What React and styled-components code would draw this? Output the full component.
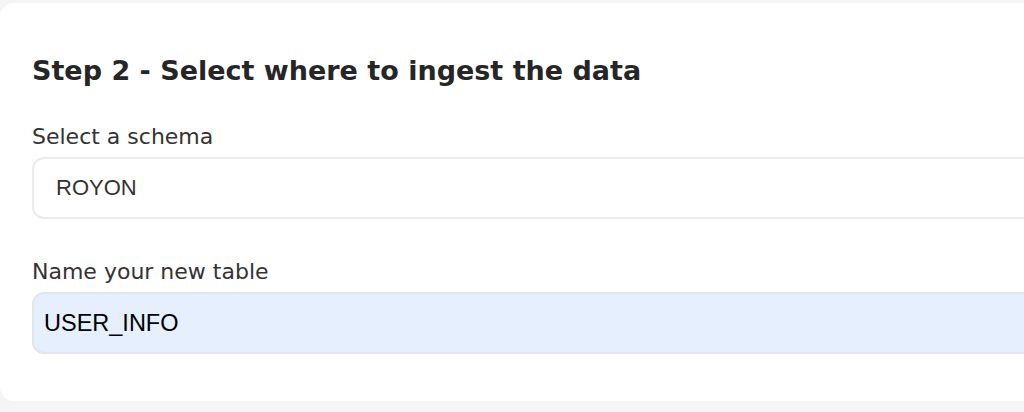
import React from 'react'
import styled, { createGlobalStyle } from 'styled-components'

const GlobalStyle = createGlobalStyle`
  html, body {
    margin: 0;
    padding: 0;
    background: #f5f5f5;
    overflow: hidden;
  }
  body {
    font-family: 'DejaVu Sans', 'Lato', sans-serif;
  }
`

const Page = styled.div`
  width: 1024px;
  height: 412px;
  padding-top: 3px;
  box-sizing: border-box;
  overflow: hidden;
`

const Card = styled.section`
  width: 1120px;
  height: 398px;
  box-sizing: border-box;
  background: #ffffff;
  border-radius: 14px;
  padding: 49px 0 0 32px;
  display: flex;
  flex-direction: column;
`

const Heading = styled.h2`
  margin: 0;
  font-size: 27px;
  font-weight: 700;
  color: #262626;
  line-height: 38px;
`

const Field = styled.div`
  display: flex;
  flex-direction: column;
  margin-top: ${(p) => p.$top}px;
`

const Label = styled.label`
  font-size: 22px;
  font-weight: 400;
  color: #333333;
  line-height: 28px;
  margin-bottom: 6px;
`

const Input = styled.input`
  height: 62px;
  box-sizing: border-box;
  border: 2px solid ${(p) => (p.$filled ? '#e2e6ec' : '#ebebeb')};
  border-radius: 12px;
  background: ${(p) => (p.$filled ? '#e6effd' : '#ffffff')};
  padding: 0 0 0 ${(p) => p.$pad}px;
  font-family: 'Liberation Sans', Arial, sans-serif;
  font-size: ${(p) => (p.$filled ? 23.5 : 22)}px;
  color: ${(p) => (p.$filled ? '#000000' : '#333333')};
  outline: none;
`

export default function App() {
  return (
    <Page>
      <GlobalStyle />
      <Card>
        <Heading>Step 2 - Select where to ingest the data</Heading>
        <Field $top={33}>
          <Label>Select a schema</Label>
          <Input $pad={22} defaultValue="ROYON" readOnly />
        </Field>
        <Field $top={39}>
          <Label>Name your new table</Label>
          <Input $pad={10} $filled defaultValue="USER_INFO" />
        </Field>
      </Card>
    </Page>
  )
}
